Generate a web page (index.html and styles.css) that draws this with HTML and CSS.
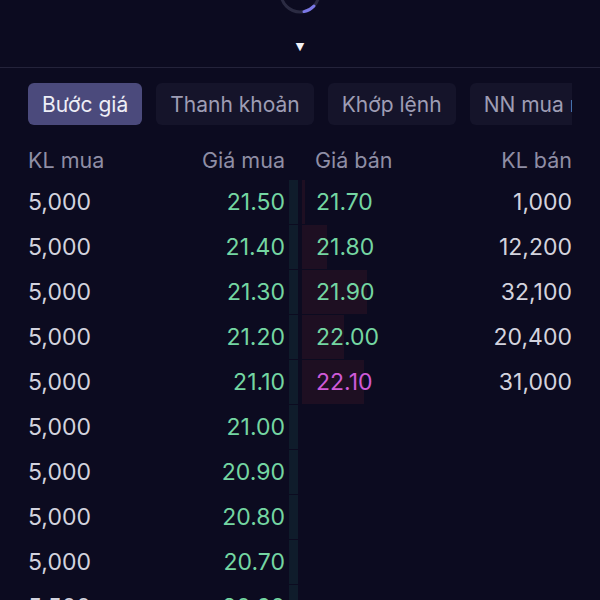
FILE: index.html
```html
<!DOCTYPE html>
<html lang="vi">
<head>
    <meta charset="UTF-8">
    <meta name="viewport" content="width=device-width, initial-scale=1.0">
    <title>Sổ lệnh</title>
    <link rel="stylesheet" href="styles.css">
</head>
<body>
    <div class="top">
        <svg class="spinner" width="44" height="44" viewBox="0 0 44 44">
            <circle cx="22" cy="22" r="19" fill="none" stroke="#2b2b42" stroke-width="3"/>
            <path d="M36 35 A19 19 0 0 1 26 40.6" fill="none" stroke="#7b78e6" stroke-width="3" stroke-linecap="round"/>
        </svg>
        <span class="caret">&#9660;</span>
    </div>

    <div class="tabs">
        <div class="tab active">Bước giá</div>
        <div class="tab">Thanh khoản</div>
        <div class="tab">Khớp lệnh</div>
        <div class="tab">NN mua ròng</div>
    </div>

    <div class="book">
        <div class="head buy"><span>KL mua</span><span>Giá mua</span></div>
        <div class="head sell"><span>Giá bán</span><span>KL bán</span></div>

        <div class="cell buy"><i class="bar" style="width:9px"></i><span class="vol">5,000</span><span class="up">21.50</span></div>
        <div class="cell sell"><i class="bar" style="width:3px"></i><span class="up">21.70</span><span class="vol">1,000</span></div>

        <div class="cell buy"><i class="bar" style="width:9px"></i><span class="vol">5,000</span><span class="up">21.40</span></div>
        <div class="cell sell"><i class="bar" style="width:25px"></i><span class="up">21.80</span><span class="vol">12,200</span></div>

        <div class="cell buy"><i class="bar" style="width:9px"></i><span class="vol">5,000</span><span class="up">21.30</span></div>
        <div class="cell sell"><i class="bar" style="width:65px"></i><span class="up">21.90</span><span class="vol">32,100</span></div>

        <div class="cell buy"><i class="bar" style="width:9px"></i><span class="vol">5,000</span><span class="up">21.20</span></div>
        <div class="cell sell"><i class="bar" style="width:42px"></i><span class="up">22.00</span><span class="vol">20,400</span></div>

        <div class="cell buy"><i class="bar" style="width:9px"></i><span class="vol">5,000</span><span class="up">21.10</span></div>
        <div class="cell sell"><i class="bar" style="width:62px"></i><span class="ceil">22.10</span><span class="vol">31,000</span></div>

        <div class="cell buy"><i class="bar" style="width:9px"></i><span class="vol">5,000</span><span class="up">21.00</span></div>
        <div class="cell sell"></div>

        <div class="cell buy"><i class="bar" style="width:9px"></i><span class="vol">5,000</span><span class="up">20.90</span></div>
        <div class="cell sell"></div>

        <div class="cell buy"><i class="bar" style="width:9px"></i><span class="vol">5,000</span><span class="up">20.80</span></div>
        <div class="cell sell"></div>

        <div class="cell buy"><i class="bar" style="width:9px"></i><span class="vol">5,000</span><span class="up">20.70</span></div>
        <div class="cell sell"></div>

        <div class="cell buy"><i class="bar" style="width:9px"></i><span class="vol">5,500</span><span class="up">20.60</span></div>
        <div class="cell sell"></div>
    </div>
</body>
</html>
```

FILE: styles.css
```css
*{
    margin:0;
    padding:0;
    box-sizing:border-box;
    font-family:Inter, "Noto Sans", sans-serif;
}
body{
    background:#0c0b20;
    color:#d3d3de;
    height:600px;
    overflow:hidden;
}
.top{
    height:68px;
    border-bottom:1px solid #24233a;
    display:flex;
    flex-direction:column;
    align-items:center;
}
.spinner{
    margin-top:-29px;
}
.caret{
    color:#f2f2f7;
    font-size:11px;
    line-height:12px;
    margin-top:26px;
    font-family:"DejaVu Sans", sans-serif;
}
.tabs{
    display:flex;
    gap:14px;
    margin:15px 28px 0;
    overflow:hidden;
}
.tab{
    flex:none;
    height:42px;
    padding:0 14px;
    display:flex;
    align-items:center;
    border-radius:6px;
    background:#15142a;
    color:#9e9db4;
    font-size:21px;
}
.tab.active{
    background:#4b4a7c;
    color:#eeeef6;
}
.book{
    display:grid;
    grid-template-columns:1fr 1fr;
    column-gap:4px;
    padding:0 28px;
    margin-top:15px;
}
.head{
    height:40px;
    display:flex;
    justify-content:space-between;
    align-items:center;
    color:#8f8ea5;
    font-size:21.5px;
}
.head.buy{
    padding-right:13px;
}
.head.sell{
    padding-left:13px;
}
.cell{
    position:relative;
    height:45px;
    display:flex;
    justify-content:space-between;
    align-items:center;
    font-size:23px;
    border-bottom:1px solid #0c0b20;
}
.cell.buy{
    padding-right:13px;
}
.cell.sell{
    padding-left:14px;
}
.cell span{
    position:relative;
}
.bar{
    position:absolute;
    top:0;
    bottom:0;
}
.buy .bar{
    right:0;
    background:#0f1c2b;
}
.sell .bar{
    left:0;
    background:#1e0f22;
}
.vol{
    color:#d3d3de;
}
.up{
    color:#74d6a2;
}
.ceil{
    color:#cf5ad8;
}
```
